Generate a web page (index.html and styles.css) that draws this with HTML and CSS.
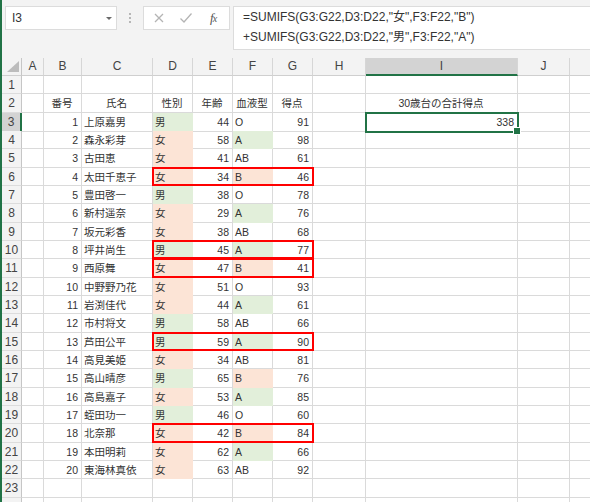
FILE: index.html
```html
<!DOCTYPE html>
<html lang="ja">
<head>
<meta charset="utf-8">
<title>SUMIFS</title>
<link rel="stylesheet" href="styles.css">
</head>
<body>
<div class="app">
  <div class="bar">
    <div class="namebox"><span>I3</span><svg class="dd" width="8" height="5" viewBox="0 0 8 5"><polygon points="1,1 7,1 4,4" fill="#6a6a6a"/></svg></div>
    <div class="grip"><svg width="4" height="12" viewBox="0 0 4 12"><circle cx="2" cy="2" r="0.9" fill="#9a9a9a"/><circle cx="2" cy="6" r="0.9" fill="#9a9a9a"/><circle cx="2" cy="10" r="0.9" fill="#9a9a9a"/></svg></div>
    <div class="fxbox">
      <svg width="12" height="12" viewBox="0 0 12 12"><path d="M2 2 L10 10 M10 2 L2 10" stroke="#b4b4b4" stroke-width="1.3" fill="none"/></svg>
      <svg width="14" height="12" viewBox="0 0 14 12"><path d="M1.5 6.5 L5 10 L12.5 1.5" stroke="#b4b4b4" stroke-width="1.3" fill="none"/></svg>
      <span class="fx"><i>f</i><span>x</span></span>
    </div>
    <div class="formula">
      <div>=SUMIFS(G3:G22,D3:D22,"女",F3:F22,"B")</div>
      <div>+SUMIFS(G3:G22,D3:D22,"男",F3:F22,"A")</div>
    </div>
  </div>
  <div class="sheet">
    <div class="row colhead"><span class="corner"><svg width="14" height="12" viewBox="0 0 14 12"><polygon points="13,0 13,11 1,11" fill="#bcbcbc"/></svg></span><span>A</span><span>B</span><span>C</span><span>D</span><span>E</span><span>F</span><span>G</span><span>H</span><span class="on">I</span><span>J</span><span></span></div>
    <div class="row"><span class="rh">1</span><span></span><span></span><span></span><span></span><span></span><span></span><span></span><span></span><span></span><span></span><span></span></div>
    <div class="row"><span class="rh">2</span><span></span><span class="c">番号</span><span class="c">氏名</span><span class="c">性別</span><span class="c">年齢</span><span class="c">血液型</span><span class="c">得点</span><span></span><span class="c">30歳台の合計得点</span><span></span><span></span></div>
    <div class="row"><span class="rh on">3</span><span></span><span class="r">1</span><span>上原嘉男</span><span class="g">男</span><span class="r">44</span><span>O</span><span class="r">91</span><span></span><span class="r sel">338</span><span></span><span></span></div>
    <div class="row"><span class="rh">4</span><span></span><span class="r">2</span><span>森永彩芽</span><span class="p">女</span><span class="r">58</span><span class="g">A</span><span class="r">98</span><span></span><span></span><span></span><span></span></div>
    <div class="row"><span class="rh">5</span><span></span><span class="r">3</span><span>古田恵</span><span class="p">女</span><span class="r">41</span><span>AB</span><span class="r">61</span><span></span><span></span><span></span><span></span></div>
    <div class="row"><span class="rh">6</span><span></span><span class="r">4</span><span>太田千恵子</span><span class="p">女</span><span class="r">34</span><span class="p">B</span><span class="r">46</span><span></span><span></span><span></span><span></span><span class="mark"></span></div>
    <div class="row"><span class="rh">7</span><span></span><span class="r">5</span><span>豊田啓一</span><span class="g">男</span><span class="r">38</span><span>O</span><span class="r">78</span><span></span><span></span><span></span><span></span></div>
    <div class="row"><span class="rh">8</span><span></span><span class="r">6</span><span>新村遥奈</span><span class="p">女</span><span class="r">29</span><span class="g">A</span><span class="r">76</span><span></span><span></span><span></span><span></span></div>
    <div class="row"><span class="rh">9</span><span></span><span class="r">7</span><span>坂元彩香</span><span class="p">女</span><span class="r">38</span><span>AB</span><span class="r">68</span><span></span><span></span><span></span><span></span></div>
    <div class="row"><span class="rh">10</span><span></span><span class="r">8</span><span>坪井尚生</span><span class="g">男</span><span class="r">45</span><span class="g">A</span><span class="r">77</span><span></span><span></span><span></span><span></span><span class="mark"></span></div>
    <div class="row"><span class="rh">11</span><span></span><span class="r">9</span><span>西原舞</span><span class="p">女</span><span class="r">47</span><span class="p">B</span><span class="r">41</span><span></span><span></span><span></span><span></span><span class="mark"></span></div>
    <div class="row"><span class="rh">12</span><span></span><span class="r">10</span><span>中野野乃花</span><span class="p">女</span><span class="r">51</span><span>O</span><span class="r">93</span><span></span><span></span><span></span><span></span></div>
    <div class="row"><span class="rh">13</span><span></span><span class="r">11</span><span>岩渕佳代</span><span class="p">女</span><span class="r">44</span><span class="g">A</span><span class="r">61</span><span></span><span></span><span></span><span></span></div>
    <div class="row"><span class="rh">14</span><span></span><span class="r">12</span><span>市村将文</span><span class="g">男</span><span class="r">58</span><span>AB</span><span class="r">66</span><span></span><span></span><span></span><span></span></div>
    <div class="row"><span class="rh">15</span><span></span><span class="r">13</span><span>芦田公平</span><span class="g">男</span><span class="r">59</span><span class="g">A</span><span class="r">90</span><span></span><span></span><span></span><span></span><span class="mark"></span></div>
    <div class="row"><span class="rh">16</span><span></span><span class="r">14</span><span>高見美姫</span><span class="p">女</span><span class="r">34</span><span>AB</span><span class="r">81</span><span></span><span></span><span></span><span></span></div>
    <div class="row"><span class="rh">17</span><span></span><span class="r">15</span><span>高山晴彦</span><span class="g">男</span><span class="r">65</span><span class="p">B</span><span class="r">76</span><span></span><span></span><span></span><span></span></div>
    <div class="row"><span class="rh">18</span><span></span><span class="r">16</span><span>高島嘉子</span><span class="p">女</span><span class="r">53</span><span class="g">A</span><span class="r">85</span><span></span><span></span><span></span><span></span></div>
    <div class="row"><span class="rh">19</span><span></span><span class="r">17</span><span>蛭田功一</span><span class="g">男</span><span class="r">46</span><span>O</span><span class="r">60</span><span></span><span></span><span></span><span></span></div>
    <div class="row"><span class="rh">20</span><span></span><span class="r">18</span><span>北奈那</span><span class="p">女</span><span class="r">42</span><span class="p">B</span><span class="r">84</span><span></span><span></span><span></span><span></span><span class="mark"></span></div>
    <div class="row"><span class="rh">21</span><span></span><span class="r">19</span><span>本田明莉</span><span class="p">女</span><span class="r">62</span><span class="g">A</span><span class="r">66</span><span></span><span></span><span></span><span></span></div>
    <div class="row"><span class="rh">22</span><span></span><span class="r">20</span><span>東海林真依</span><span class="p">女</span><span class="r">63</span><span>AB</span><span class="r">92</span><span></span><span></span><span></span><span></span></div>
    <div class="row"><span class="rh">23</span><span></span><span></span><span></span><span></span><span></span><span></span><span></span><span></span><span></span><span></span><span></span></div>
    <div class="row"><span class="rh"></span><span></span><span></span><span></span><span></span><span></span><span></span><span></span><span></span><span></span><span></span><span></span></div>
  </div>
</div>
</body>
</html>
```
FILE: styles.css
```css
* { box-sizing: border-box; }
html, body { margin: 0; padding: 0; }
body {
  width: 590px;
  height: 502px;
  overflow: hidden;
  background: #fff;
  font-family: "Liberation Sans", "Noto Sans CJK JP", sans-serif;
  color: #333;
}
.app {
  height: 502px;
  overflow: hidden;
  border-left: 2px solid #217346;
}

/* formula bar */
.bar {
  height: 58px;
  background: #f3f3f3;
  display: flex;
  align-items: flex-start;
  padding-top: 6px;
}
.namebox {
  margin-left: 3px;
  width: 112px;
  height: 24px;
  background: #fff;
  border: 1px solid #dcdcdc;
  display: flex;
  align-items: center;
  justify-content: space-between;
  padding: 0 3px 0 6px;
  font-size: 12px;
  color: #333;
}
.namebox .dd { margin-top: 1px; }
.grip {
  width: 26px;
  height: 24px;
  display: flex;
  align-items: center;
  justify-content: center;
}
.fxbox {
  width: 87px;
  height: 24px;
  background: #fff;
  border: 1px solid #dcdcdc;
  display: flex;
  align-items: center;
  padding-left: 9px;
  gap: 14px;
}
.fx {
  font-family: "Liberation Serif", serif;
  font-size: 13px;
  color: #555;
  margin-left: 3px;
  letter-spacing: -1px;
}
.fx span { font-size: 10px; font-style: italic; }
.formula {
  margin-left: 3px;
  flex: 1;
  height: 44px;
  background: #fff;
  border: 1px solid #dcdcdc;
  border-right: none;
  padding-left: 9px;
  font-size: 12px;
  line-height: 20px;
  color: #333;
  white-space: nowrap;
}

/* sheet */
.row {
  display: grid;
  grid-template-columns: 20px 22px 38px 71px 40px 40px 40px 40px 53px 152px 52px 60px;
  height: 18.33px;
  font-size: 10.5px;
  line-height: 18px;
}
.row > * {
  grid-row: 1;
  border-right: 1px solid #dadada;
  border-bottom: 1px solid #dadada;
  padding: 0 3px 0 2px;
  white-space: nowrap;
  overflow: hidden;
}
.row > :nth-child(1) { grid-column: 1; }
.row > :nth-child(2) { grid-column: 2; }
.row > :nth-child(3) { grid-column: 3; }
.row > :nth-child(4) { grid-column: 4; }
.row > :nth-child(5) { grid-column: 5; }
.row > :nth-child(6) { grid-column: 6; }
.row > :nth-child(7) { grid-column: 7; }
.row > :nth-child(8) { grid-column: 8; }
.row > :nth-child(9) { grid-column: 9; }
.row > :nth-child(10) { grid-column: 10; }
.row > :nth-child(11) { grid-column: 11; }
.row > :nth-child(12) { grid-column: 12; }

.row > .r { text-align: right; }
.row > .c { text-align: center; }
.row > .g { background: #e2efda; border-color: transparent; }
.row > .p { background: #fce4d6; border-color: transparent; }

.row > .rh {
  background: #f3f3f3;
  border-right: 1px solid #c6c6c6;
  border-bottom: 1px solid #dcdcdc;
  text-align: center;
  font-size: 12px;
  color: #444;
  padding: 0;
}
.row > .rh.on {
  background: #d3d3d3;
  border-right: 2px solid #217346;
}

.colhead { height: 18px; }
.colhead > * {
  background: #f3f3f3;
  border-right: 1px solid #d6d6d6;
  border-bottom: 1px solid #cfcfcf;
  text-align: center;
  font-size: 12px;
  line-height: 17px;
  color: #444;
  padding: 0;
}
.colhead > .corner {
  border-right: 1px solid #c6c6c6;
  display: flex;
  align-items: flex-end;
  justify-content: flex-end;
  padding: 0 1px 2px 0;
}
.colhead > .on {
  background: #d3d3d3;
  border-bottom: 2px solid #217346;
}

.row > .sel {
  position: relative;
  overflow: visible;
  outline: 2px solid #217346;
  outline-offset: -1px;
  z-index: 2;
}
.row > .sel::after {
  content: "";
  position: absolute;
  right: -4px;
  bottom: -4px;
  width: 6px;
  height: 6px;
  background: #217346;
  border: 1px solid #fff;
}

.row > .mark {
  grid-column: 5 / 9;
  margin: -1px -1px 0 -1px;
  border: 2px solid #ff0000;
  padding: 0;
  z-index: 1;
  position: relative;
}
```
